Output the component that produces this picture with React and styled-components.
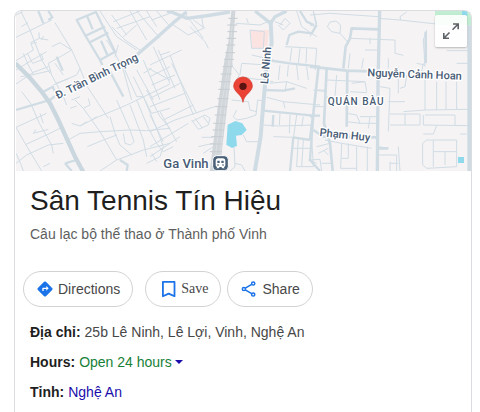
import React from 'react';
import styled, { createGlobalStyle } from 'styled-components';

const GlobalStyle = createGlobalStyle`
    * {
        box-sizing: border-box;
    }

    body {
        margin: 0;
        background: #fff;
        color: #474747;
        font-family: "Liberation Sans", Arial, sans-serif;
        font-size: 14px;
        line-height: 20px;
    }
`;

const Page = styled.main`
    display: flex;
    min-height: 100vh;
    padding: 10px 8px 0 14px;
`;

const Card = styled.article`
    flex: 1;
    min-width: 0;
    border: 1px solid #dadce0;
    border-bottom: 0;
    border-radius: 8px 8px 0 0;
    overflow: hidden;
`;

const MapFrame = styled.div`
    position: relative;
    margin-left: 1px;
    height: 160px;
    background: #f5f3f4;
`;

const MapSvg = styled.svg`
    display: block;
    width: 100%;
    height: 100%;
    fill: none;
    stroke-linejoin: round;
`;

const Roads = styled.path`
    stroke: ${props => props.$tone || '#d0dce4'};
    stroke-width: ${props => props.$width};
`;

const MapLabel = styled.text`
    fill: #475b75;
    stroke: #fff;
    stroke-width: 8px;
    paint-order: stroke;
    font-family: Roboto, sans-serif;
    font-weight: 500;
    font-size: ${props => props.$size || 33}px;
    letter-spacing: ${props => props.$spaced ? '3px' : 'normal'};
`;

const ExpandButton = styled.button`
    position: absolute;
    top: 4px;
    right: 4px;
    display: flex;
    align-items: center;
    justify-content: center;
    width: 32px;
    height: 32px;
    padding: 0;
    border: 0;
    border-radius: 2px;
    background: rgba(255, 255, 255, 0.9);
    box-shadow: 0 1px 2px rgba(0, 0, 0, 0.25);
    color: #5f6368;
    cursor: pointer;
`;

const Heading = styled.header`
    padding: 12px 15px 0;
`;

const Title = styled.h1`
    margin: 0;
    color: #1f1f1f;
    font-size: 28px;
    font-weight: 400;
    line-height: 36px;
`;

const Category = styled.p`
    margin: 5px 0 0;
    color: #5e5e5e;
`;

const Actions = styled.div`
    display: flex;
    gap: 6px;
    padding: 27px 8px 0;
`;

const ActionButton = styled.button`
    display: flex;
    align-items: center;
    gap: 5px;
    height: 36px;
    padding: 0 12px 0 ${props => props.$serif ? 15 : 13}px;
    margin-right: ${props => props.$spaced ? 6 : 0}px;
    border: 1px solid #d2d2d2;
    border-radius: 18px;
    background: #fff;
    color: #474747;
    font-family: ${props => props.$serif ? '"Liberation Serif", "Times New Roman", serif' : 'inherit'};
    font-size: 14px;
    line-height: 20px;
    cursor: pointer;

    svg {
        flex: none;
    }
`;

const Facts = styled.dl`
    margin: 0;
    padding: 15px 15px 20px;
`;

const Fact = styled.div`
    display: flex;
    gap: 4px;
    margin-bottom: 10px;

    dt {
        color: #1f1f1f;
        font-weight: 700;
    }

    dd {
        margin: 0;
    }
`;

const HoursButton = styled.button`
    display: flex;
    align-items: center;
    gap: 3px;
    padding: 0;
    border: 0;
    background: none;
    color: #188038;
    font: inherit;
    cursor: pointer;

    &::after {
        content: "";
        border: 4px solid transparent;
        border-top-color: #1a0dab;
        border-bottom: 0;
    }
`;

const ProvinceLink = styled.a`
    color: #1a0dab;
    text-decoration: none;
`;

// the map is drawn in three tiles, three units to a pixel
function WestTile() {
    return (
        <g>
            <Roads $width="3" d="M48 112L155 60M62 33L90 90L125 180L150 220M64 80L84 68M48 45L68 35M48 182L100 150L92 128L118 115L117 97M118 115L145 120M95 130L110 128M155 140L180 128L215 150L190 165L145 190L155 225L190 290L200 315M70 160L85 195L100 222M82 160L98 190L130 178L122 160M48 210L100 178L140 155M48 252L100 217L145 200M62 230L95 225L150 212M165 68L215 150L240 205L262 260L295 310L325 355M165 190L190 225M168 250L208 235M160 255L230 225L240 205M65 275L92 310L118 370L155 435L160 460M48 382L140 340M48 382L75 430L125 513M48 490L80 465L145 435L190 430M48 460L62 490L70 513M78 433L150 400L180 385M100 400L108 388M100 400L145 388M120 340L130 370M205 420L240 400L300 395L390 390M215 370L240 378L285 355L380 315L510 252M240 378L260 365M225 300L250 325L275 360L300 395L350 480M250 325L270 315L265 295M210 325L230 318M215 300L240 290M262 440L310 420L350 405M275 360L290 350M350 480L300 513M350 480L430 450L510 430M345 400L360 435L395 465M370 400L375 430L392 435L402 425L390 390L350 300M330 350L345 400M390 315L430 420L440 470M410 300L445 385L470 430M430 290L470 385L490 440M440 270L480 350L510 385M390 390L440 392L510 385M400 230L455 340L510 325M410 210L460 300M370 200L410 290L430 290M430 180L480 300M460 140L510 250M430 220L455 205M480 165L510 155M445 205L510 240M340 150L370 210L395 300M335 80L375 120L420 150M300 33L350 110L410 150M335 45L380 105M340 65L420 33M350 85L450 50M370 110L410 75M390 33L440 120M410 33L480 115M440 33L470 80M455 60L510 40M355 135L345 170M320 120L345 160M130 108L125 120M130 500L150 490M195 490L225 480M440 490L480 470L490 440" />
            <Roads $width="7" d="M48 330L150 300L165 288M230 60L288 36L345 155L300 180L255 105ZM262 50L278 88M255 108L315 80M270 127L325 98M303 122L322 165M300 180L307 195M330 215L370 290M115 33L130 70M145 33L157 52L145 60M170 170L188 212M130 275L158 260L165 275M195 490L215 513M195 490L230 480M360 480L383 495L380 513" />
            <Roads $width="10" d="M410 165L465 118L520 68L560 36" />
            <Roads $width="13" $tone="#cad7df" d="M46 190L85 228L125 275L150 310L175 360L200 415L225 470L250 516" />
        </g>
    );
}

function CentreTile() {
    return (
        <g transform="translate(450 0)">
            <Roads $width="3" d="M60 80L20 33M70 75L115 105L160 85L155 50M120 80L165 125L175 145M130 60L165 85M105 40L160 115M0 195L95 150M60 165L130 345M25 150L75 265M0 230L60 200M5 255L75 225M0 295L90 250M0 320L105 280M40 360L130 315M0 395L75 360L140 338L200 318M0 345L40 425M30 335L80 425M0 440L115 370M0 470L90 410M20 430L40 455M5 460L20 485M40 455L70 440M125 360L145 388L175 375L180 355L165 345L125 365M135 355L158 385M160 350L175 370M155 412L190 412M145 440L190 430M160 460L190 440M65 190L140 340M258 70L330 75L365 60M290 55L295 70M270 225L275 190L350 195L365 180M240 170L248 200L268 225L260 240M275 230L300 235L370 245M245 300L295 305L300 330L320 335M260 330L250 350L260 360L290 355L318 345L323 300L335 302M280 405L290 425L325 425M250 400L255 500L240 513M255 490L275 495L285 513M305 165L370 180M390 75L405 55L420 70L400 90L385 75M400 75L375 65M440 33L455 80L500 110M490 33L500 70L485 100M405 140L500 145L495 210M425 145L420 185M450 145L445 190M470 145L468 190M390 195L385 240M415 195L412 230M440 195L445 240M470 200L475 240M355 250L410 245L470 265M410 245L405 275M350 292L400 305L405 325M400 305L510 315M390 340L388 375M420 345L418 400M440 345L430 415L420 513M460 350L455 380M340 375L385 378L490 375M370 410L430 412M445 415L440 500L490 500L485 415M460 420L455 500M430 445L485 445M475 480L500 490" />
            <Roads $width="7" d="M350 180L420 190L510 200M340 270L400 272L435 265M340 332L490 347L510 347M370 345L368 380M490 345L480 480L510 513M430 412L480 420M430 412L420 513M410 135L418 105L445 95L485 100L500 75M450 33L470 65L492 75" />
            <Roads $width="10" d="M50 33L70 38L110 55L165 48L240 36M315 33L362 70L375 50L410 33" />
            <Roads $width="12" d="M362 65L365 130L350 200L340 310L332 410L314 516" />
            <path fill="#fbe3e2" d="M302 90H357L352 145H305Z" />
            <Roads $width="3" d="M300 90L343 95L340 145L305 145Z" />
            <path fill="#d1d6da" d="M244 33H256L247 190L231 325L217 440L211 516H179L202 330L222 190L236 120Z" />
            <Roads $width="2" $tone="#e2e5e8" d="M247 70L235 195L212 330L192 513M244 150L225 325L205 513" />
            <Roads $width="3" $tone="#c6cdd2" d="M235 55H263M232 75H262M232 95H261M230 115H258M228 135H256M225 158H255M222 178H252M218 200H248M212 222H245M208 245H242M205 268H240M202 296H236M196 320H232M194 345H228M190 370H226M188 390H222M184 410H220M180 432H218M180 455H215" />
            <path fill="#8fd9ed" d="M233 374L256 363L277 370L290 390L275 405L258 407L261 437L246 444L229 434Z" />
        </g>
    );
}

function EastTile() {
    return (
        <g transform="translate(930 0)">
            <Roads $width="3" d="M0 45L60 40L205 50M10 33L18 75L0 110M0 75L18 80M112 125L90 100L65 95L52 80L60 66L78 63L92 75L90 100M120 115L255 120L255 160L280 166M180 115V132M120 160L115 205M165 150H205M160 175L155 205M205 55L270 60L380 72M272 60L270 50L290 36M350 90L340 120L345 200M340 190L335 215M320 190L345 195M410 152H478M440 190H478M50 225L48 275L10 270M50 240L165 245M80 225L75 290M125 250L165 245L170 275M120 275L170 278M20 270H45M15 320H40M45 290L100 300M110 340L140 345L150 370L110 365M150 350H200M150 370H200M180 350L175 385M210 260L240 265L235 395M235 175V205M265 200V280M290 225L285 260L270 265M235 305H285M280 335L345 330L478 328M240 342H330V375H240M285 342V375M345 230V330M380 245V330M408 245V330M440 245V330M345 345H435V375M340 345V375L478 377M380 377L370 402H340M450 402H470M350 420H440V500L350 505L338 495L338 430ZM370 420V500M370 455H440M405 455V495M45 420L95 430L185 445M95 430L92 505L140 505M115 430V475L95 475M140 440V513M172 440V513M20 440L60 430M25 460L55 445M40 450L55 465M205 440L235 445M205 465H260V513M240 490H265M240 485V513M265 440L270 513M0 480L30 478L35 513M35 490H65M75 400L120 405" />
            <Roads $width="8" d="M0 200L50 205L110 212L205 215M25 205L10 340L0 420M50 205L42 370L60 430L68 513M112 210L110 380M100 205L107 140L120 115L125 85L205 88M0 345L10 355M205 445H235M347 95V190M10 390L40 410L200 412" />
            <Roads $width="10" d="M209 33L204 250L202 513" />
            <path fill="#c1edd3" d="M375 33H484V76H375Z" />
            <path fill="#8fd9ed" d="M456 33H472V48H456ZM444 471H462V489H444Z" />
            <Roads $width="12" $tone="#cfdbe3" d="M478 76V516" />
        </g>
    );
}

function LocationMap() {
    return (
        <MapFrame>
            <MapSvg viewBox="48 33 1365 480" preserveAspectRatio="xMidYMid slice" role="img" aria-label="Map">
                <WestTile />
                <CentreTile />
                <EastTile />
                <MapLabel transform="translate(173 298) rotate(-26)">Đ. Trần Bình Trọng</MapLabel>
                <MapLabel transform="translate(804 253) rotate(-85)">Lê Ninh</MapLabel>
                <MapLabel transform="translate(1102 229) rotate(2)">Nguyễn Cảnh Hoan</MapLabel>
                <MapLabel transform="translate(958 408) rotate(6)">Phạm Huy</MapLabel>
                <MapLabel $size="30" $spaced x="983" y="316">QUÁN BÀU</MapLabel>
                <MapLabel $size="39" x="490" y="503">Ga Vinh</MapLabel>
                {/* station */}
                <rect x="638" y="467" width="47" height="45" rx="12" fill="#4a6178" stroke="#fff" strokeWidth="3" />
                <path fill="#fff" fillRule="evenodd" d="M655 475H668Q676 475 676 483V496Q676 501 671 501L674 505H667L664 501H659L656 505H649L652 501Q647 501 647 496V483Q647 475 655 475ZM652 482V489H659V482ZM664 482V489H671V482ZM652 493V497H656V493ZM667 493V497H671V493Z" />
                {/* pin */}
                <path fill="#ea4335" stroke="#d33426" strokeWidth="2" d="M729 307C726 290 718 285 709 275C703 268 701 263 701 258A28 27 0 0 1 757 258C757 263 755 268 749 275C740 285 732 290 729 307Z" />
                <circle cx="729" cy="259" r="11" fill="#5c1413" />
            </MapSvg>
            <ExpandButton type="button" aria-label="Expand map">
                <svg width="18" height="18" viewBox="0 0 18 18" fill="none" stroke="currentColor" strokeWidth="1.6">
                    <path d="M11 2H16.200V7.200M16.200 2L10.500 7.700M1.800 11V16.200H7M1.800 16.200L7.500 10.500" />
                </svg>
            </ExpandButton>
        </MapFrame>
    );
}

function DirectionsIcon() {
    return (
        <svg width="16" height="16" viewBox="0 0 24 24" fill="#1a73e8" aria-hidden="true">
            <path d="M22.7 10.6L13.4 1.3a2 2 0 0 0-2.8 0L1.3 10.6a2 2 0 0 0 0 2.8l9.3 9.3a2 2 0 0 0 2.8 0l9.3-9.3a2 2 0 0 0 0-2.8ZM14 14.5V12h-4v3H8v-4a1 1 0 0 1 1-1h5V7.500l3.500 3.500Z" />
        </svg>
    );
}

function SaveIcon() {
    return (
        <svg width="15" height="18" viewBox="0 0 15 18" fill="none" stroke="#1a73e8" strokeWidth="1.8" aria-hidden="true">
            <path d="M1.900 1.900H13.500V16.200L7.700 13.600L1.900 16.200Z" strokeLinejoin="round" />
        </svg>
    );
}

function ShareIcon() {
    return (
        <svg width="16" height="16" viewBox="0 0 16 16" fill="none" stroke="#1a73e8" strokeWidth="1.5" aria-hidden="true">
            <path d="M4.300 7.200L10.700 3.300M4.300 8.800L10.700 12.700" />
            <circle cx="2.900" cy="8" r="1.600" />
            <circle cx="12.200" cy="2.500" r="1.600" />
            <circle cx="12.200" cy="13.500" r="1.600" />
        </svg>
    );
}

export default function App() {
    return (
        <Page>
            <GlobalStyle />
            <Card>
                <LocationMap />
                <Heading>
                    <Title>Sân Tennis Tín Hiệu</Title>
                    <Category>Câu lạc bộ thể thao ở Thành phố Vinh</Category>
                </Heading>
                <Actions>
                    <ActionButton type="button" $spaced><DirectionsIcon />Directions</ActionButton>
                    <ActionButton type="button" $serif><SaveIcon />Save</ActionButton>
                    <ActionButton type="button"><ShareIcon />Share</ActionButton>
                </Actions>
                <Facts>
                    <Fact>
                        <dt>Địa chỉ:</dt>
                        <dd>25b Lê Ninh, Lê Lợi, Vinh, Nghệ An</dd>
                    </Fact>
                    <Fact>
                        <dt>Hours:</dt>
                        <dd><HoursButton type="button">Open 24 hours</HoursButton></dd>
                    </Fact>
                    <Fact>
                        <dt>Tỉnh:</dt>
                        <dd><ProvinceLink href="#nghe-an">Nghệ An</ProvinceLink></dd>
                    </Fact>
                </Facts>
            </Card>
        </Page>
    );
}
